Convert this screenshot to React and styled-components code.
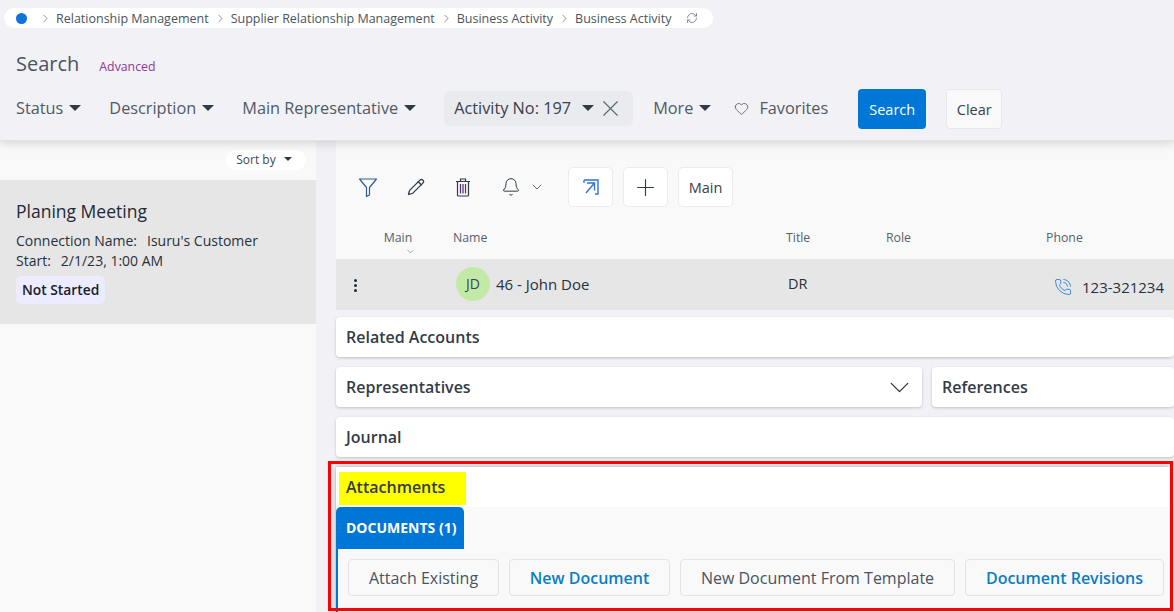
import React from 'react';
import styled, { createGlobalStyle } from 'styled-components';
import { ChevronRight, ChevronDown, RefreshCw, X, Heart, Pencil, Bell, Plus, PhoneCall } from 'lucide-react';

const Global = createGlobalStyle`
  html, body { margin: 0; padding: 0; height: 100%; overflow: hidden; }
  body { font-family: "Open Sans", "Liberation Sans", sans-serif; background: #f2f1f5; color: #1f2a36; }
  * { box-sizing: border-box; }
`;

const Page = styled.div`
  position: relative;
  width: 1174px;
  height: 612px;
  overflow: hidden;
  display: flex;
  flex-direction: column;
`;

const Header = styled.header`
  height: 141px;
  flex: none;
  padding: 8px 0 0 4px;
  background: #f2f1f5;
  border-bottom: 1px solid #e2e2e4;
  box-shadow: 0 2px 10px rgba(0, 0, 0, 0.16);
  position: relative;
  z-index: 2;
`;

const Crumbs = styled.nav`
  width: 709px;
  height: 20px;
  border-radius: 10px;
  background: #fff;
  display: flex;
  align-items: center;
  padding-left: 12px;
  font-size: 12.5px;
  color: #4a5460;
  svg { flex: none; }
`;

const Dot = styled.span`
  width: 11px;
  height: 11px;
  border-radius: 50%;
  background: #0b76d8;
  margin-right: 12px;
`;

const Crumb = styled.span`
  margin: 0 5px 0 4px;
  white-space: nowrap;
`;

const Refresh = styled.span`
  display: flex;
  margin-left: 10px;
`;

const SearchRow = styled.div`
  display: flex;
  align-items: baseline;
  padding: 22px 0 0 12px;
  height: 56px;
`;

const SearchTitle = styled.h1`
  margin: 0;
  font-size: 20px;
  font-weight: 400;
  color: #4a5460;
  line-height: 28px;
`;

const AdvancedLink = styled.a`
  margin-left: 20px;
  font-size: 12.3px;
  color: #8e3a96;
`;

const FilterRow = styled.div`
  display: flex;
  align-items: center;
  height: 36px;
  margin-top: 6px;
  padding-left: 12px;
`;

const FilterItem = styled.div`
  display: flex;
  align-items: center;
  gap: 6px;
  font-size: 16.3px;
  color: #4f5a66;
  white-space: nowrap;
  margin-right: ${({ $gap }) => $gap}px;
`;

const Caret = styled.span`
  display: inline-block;
  width: 0;
  height: 0;
  border-left: ${({ $size }) => $size || 6}px solid transparent;
  border-right: ${({ $size }) => $size || 6}px solid transparent;
  border-top: ${({ $size }) => $size || 6}px solid #2f3a46;
`;

const ActiveFilter = styled.div`
  display: flex;
  align-items: center;
  width: 189px;
  height: 35px;
  padding-left: 10px;
  border-radius: 6px;
  background: #e9ebee;
  font-size: 16.3px;
  color: #37414c;
  white-space: nowrap;
  margin-right: 20px;
`;

const ActiveCaret = styled(Caret)`
  margin: 0 3px 0 11px;
`;

const Favorites = styled.div`
  display: flex;
  align-items: center;
  gap: 10px;
  font-size: 16.3px;
  color: #4f5a66;
  margin-right: 30px;
`;

const SearchButton = styled.button`
  width: 68px;
  height: 40px;
  margin: 2px 20px 0 0;
  border: none;
  border-radius: 4px;
  background: #0076d6;
  color: #fff;
  font: 400 14.5px "Open Sans", sans-serif;
`;

const ClearButton = styled.button`
  width: 56px;
  height: 40px;
  margin-top: 2px;
  border: 1px solid #e8e8ea;
  border-radius: 4px;
  background: #f9f9f9;
  color: #37414c;
  font: 400 14.5px "Open Sans", sans-serif;
`;

const Body = styled.div`
  flex: 1;
  display: grid;
  grid-template-columns: 316px 838px;
  column-gap: 20px;
  min-height: 0;
`;

const Sidebar = styled.aside`
  background: #f9f9f9;
`;

const SortRow = styled.div`
  display: flex;
  justify-content: flex-end;
  padding: 9px 10px 10px 0;
`;

const SortPill = styled.div`
  width: 80px;
  height: 20px;
  padding: 0 4px 2px 0;
  border-radius: 10px;
  background: #fff;
  display: flex;
  align-items: center;
  justify-content: center;
  gap: 8px;
  font-size: 12px;
  color: #3d4854;
`;

const ActivityCard = styled.div`
  height: 144px;
  background: #e6e6e6;
  padding: 19px 16px 0;
`;

const ActivityTitle = styled.div`
  font-size: 17.5px;
  line-height: 25px;
  color: #1f2a36;
  margin-bottom: 7px;
`;

const ActivityLine = styled.div`
  font-size: 14px;
  line-height: 20px;
  color: #27313c;
  span { margin-left: 10px; }
`;

const StatusBadge = styled.div`
  display: inline-block;
  margin-top: 5px;
  padding: 0 6px;
  height: 28px;
  line-height: 27px;
  border-radius: 5px;
  background: #ecebff;
  font-size: 13.8px;
  font-weight: 600;
  color: #17202a;
`;

const Main = styled.main`
  min-width: 0;
`;

const ContactPanel = styled.section`
  background: #f9f9f9;
  height: 169px;
`;

const Toolbar = styled.div`
  height: 66px;
  padding: 26px 0 0 22px;
  display: flex;
  align-items: center;
`;

const ToolIcon = styled.span`
  display: flex;
  color: #2f3a46;
  margin-right: ${({ $gap }) => $gap}px;
`;

const ToolButton = styled.button`
  height: 40px;
  width: ${({ $w }) => $w}px;
  border: 1px solid #ececec;
  border-radius: 5px;
  background: #fff;
  color: #37414c;
  display: flex;
  align-items: center;
  justify-content: center;
  font: 400 14.5px "Open Sans", sans-serif;
  margin-right: 10px;
  padding: 0;
`;

const ColumnHeads = styled.div`
  display: grid;
  grid-template-columns: 47px 70px 333px 100px 160px 1fr;
  height: 52px;
  padding-top: 23px;
  font-size: 12.3px;
  color: #56616d;
`;

const HeadCell = styled.div`
  display: flex;
  flex-direction: column;
  line-height: 16px;
`;

const SortableHead = styled(HeadCell)`
  align-items: center;
  padding-right: 40px;
  svg { margin-left: 24px; }
`;

const ContactRow = styled.div`
  display: grid;
  grid-template-columns: 47px 70px 333px 100px 160px 1fr;
  height: 51px;
  background: #e6e6e6;
  font-size: 15px;
  color: #27313c;
`;

const RowCell = styled.div`
  display: flex;
  align-items: center;
  height: 51px;
  padding-bottom: 2px;
  white-space: nowrap;
`;

const TitleCell = styled(RowCell)`
  padding-left: 2px;
  font-size: 14.5px;
`;

const Kebab = styled.span`
  margin: 3px 0 0 18px;
  display: flex;
  flex-direction: column;
  gap: 2px;
  i {
    width: 3px;
    height: 3px;
    border-radius: 50%;
    background: #1f2a36;
  }
`;

const Avatar = styled.span`
  width: 34px;
  height: 34px;
  border-radius: 50%;
  background: #c3e9a6;
  display: flex;
  align-items: center;
  justify-content: center;
  margin: 0 6px 0 3px;
  color: #3a4650;
  font-size: 14px;
`;

const PhoneCell = styled(RowCell)`
  gap: 10px;
  padding: 5px 0 0 8px;
`;

const Panels = styled.div`
  display: flex;
  flex-direction: column;
  gap: 10px;
  padding-top: 7px;
`;

const PanelRow = styled.div`
  display: flex;
  gap: 10px;
`;

const Panel = styled.div`
  flex: ${({ $w }) => ($w ? `0 0 ${$w}px` : '1 1 auto')};
  height: 40px;
  background: #fff;
  border-radius: 4px;
  box-shadow: 0 1px 3px rgba(0, 0, 0, 0.2);
  display: flex;
  align-items: center;
  justify-content: space-between;
  padding: 0 13px 0 10px;
  font-size: 16px;
  font-weight: 600;
  color: #333c46;
`;

const PanelChevron = styled.span`
  display: flex;
  margin-right: -7px;
  color: #2f3a46;
`;

const AttachmentsPanel = styled.section`
  background: #fff;
  box-shadow: 0 0 6px rgba(0, 0, 0, 0.3);
  height: 150px;
  margin-right: 4px;
`;

const AttachmentsHead = styled.div`
  height: 40px;
  padding: 5px 0 0 3px;
`;

const Highlight = styled.div`
  width: 127px;
  height: 33px;
  background: #ffff00;
  padding-left: 7px;
  line-height: 30px;
  font-size: 16px;
  font-weight: 600;
  color: #333c46;
`;

const TabArea = styled.div`
  height: 110px;
  background: #f9f9f9;
`;

const ActiveTab = styled.div`
  width: 128px;
  height: 42px;
  border-radius: 5px 5px 0 0;
  background: #0076d6;
  color: #fff;
  font-size: 14px;
  font-weight: 700;
  line-height: 42px;
  padding-left: 10px;
  white-space: nowrap;
`;

const TabContent = styled.div`
  border-left: 2px solid #0076d6;
  height: 68px;
  padding: 10px 0 0 10px;
  display: flex;
  gap: 10px;
  box-shadow: inset 0 -11px 6px -6px rgba(0, 0, 0, 0.1);
`;

const DocButton = styled.button`
  width: ${({ $w }) => $w}px;
  height: 37px;
  flex: none;
  border: 1px solid #e4e4e4;
  border-radius: 4px;
  background: #f9f9f9;
  color: ${({ $link }) => ($link ? '#0b7dc4' : '#4a5460')};
  font: ${({ $link }) => ($link ? 600 : 400)} 16px "Open Sans", sans-serif;
  padding: 0;
  white-space: nowrap;
`;

// red annotation drawn on top of the screenshot
const RedMark = styled.div`
  position: absolute;
  left: 328px;
  top: 461px;
  width: 845px;
  height: 150px;
  border: 3px solid #ff0000;
  pointer-events: none;
  z-index: 3;
`;

const crumbs = ['Relationship Management', 'Supplier Relationship Management', 'Business Activity', 'Business Activity'];

const FunnelIcon = () => (
  <svg width="20" height="20" viewBox="0 0 20 20" fill="none" stroke="#2f5f8a" strokeWidth="1.2" strokeLinejoin="round">
    <path d="M1.5 2h17l-7 8.5v7.5l-3 1.5v-9z" />
  </svg>
);

const LaunchIcon = () => (
  <svg width="18" height="18" viewBox="0 0 18 18" fill="none" stroke="#2f74d0" strokeWidth="1.4">
    <path d="M2 2h14v14h-3M2 2v3" />
    <path d="M5 5h7.5v7.5M12.5 5 4 15" />
  </svg>
);

const TrashIcon = () => (
  <svg width="16" height="19" viewBox="0 0 16 19" fill="none" stroke="#2f3a46" strokeWidth="1.2">
    <path d="M1 3.5h14M5.5 3.5V1h5v2.5" />
    <path d="M2.5 3.5v13.5a1 1 0 0 0 1 1h9a1 1 0 0 0 1-1V3.5" />
    <path d="M5.5 6v9.5M8 6v9.5" stroke="#4a2c6c" />
    <path d="M10.5 6v9.5" stroke="#6c2c4c" />
  </svg>
);

export default function App() {
  return (
    <Page>
      <Global />
      <Header>
        <Crumbs>
          <Dot />
          {crumbs.map((c, i) => (
            <React.Fragment key={i}>
              <ChevronRight size={13} strokeWidth={1.3} color="#5a6470" />
              <Crumb>{c}</Crumb>
            </React.Fragment>
          ))}
          <Refresh><RefreshCw size={12} strokeWidth={1.4} color="#5a6470" /></Refresh>
        </Crumbs>
        <SearchRow>
          <SearchTitle>Search</SearchTitle>
          <AdvancedLink>Advanced</AdvancedLink>
        </SearchRow>
        <FilterRow>
          <FilterItem $gap={28}>Status <Caret /></FilterItem>
          <FilterItem $gap={28}>Description <Caret /></FilterItem>
          <FilterItem $gap={28}>Main Representative <Caret /></FilterItem>
          <ActiveFilter>
            Activity No: 197
            <ActiveCaret />
            <X size={27} strokeWidth={1} color="#5a6470" />
          </ActiveFilter>
          <FilterItem $gap={23}>More <Caret /></FilterItem>
          <Favorites><Heart size={15} strokeWidth={1.3} color="#4f5a66" /> Favorites</Favorites>
          <SearchButton>Search</SearchButton>
          <ClearButton>Clear</ClearButton>
        </FilterRow>
      </Header>
      <Body>
        <Sidebar>
          <SortRow>
            <SortPill>Sort by <Caret $size={4} /></SortPill>
          </SortRow>
          <ActivityCard>
            <ActivityTitle>Planing Meeting</ActivityTitle>
            <ActivityLine>Connection Name:<span>Isuru's Customer</span></ActivityLine>
            <ActivityLine>Start:<span>2/1/23, 1:00 AM</span></ActivityLine>
            <StatusBadge>Not Started</StatusBadge>
          </ActivityCard>
        </Sidebar>
        <Main>
          <ContactPanel>
            <Toolbar>
              <ToolIcon $gap={29}><FunnelIcon /></ToolIcon>
              <ToolIcon $gap={30}><Pencil size={18} strokeWidth={1.7} /></ToolIcon>
              <ToolIcon $gap={30}><TrashIcon /></ToolIcon>
              <ToolIcon $gap={8}><Bell size={20} strokeWidth={1.2} /></ToolIcon>
              <ToolIcon $gap={23}><ChevronDown size={16} strokeWidth={1.1} /></ToolIcon>
              <ToolButton $w={45}><LaunchIcon /></ToolButton>
              <ToolButton $w={45}><Plus size={27} strokeWidth={1} color="#2f3a46" /></ToolButton>
              <ToolButton $w={55}>Main</ToolButton>
            </Toolbar>
            <ColumnHeads>
              <div />
              <SortableHead>Main<ChevronDown size={11} strokeWidth={1.2} /></SortableHead>
              <HeadCell>Name</HeadCell>
              <HeadCell>Title</HeadCell>
              <HeadCell>Role</HeadCell>
              <HeadCell>Phone</HeadCell>
            </ColumnHeads>
            <ContactRow>
              <RowCell><Kebab><i /><i /><i /></Kebab></RowCell>
              <div />
              <RowCell><Avatar>JD</Avatar>46 - John Doe</RowCell>
              <TitleCell>DR</TitleCell>
              <div />
              <PhoneCell><PhoneCall size={18} strokeWidth={1.2} color="#2f7fd6" />123-321234</PhoneCell>
            </ContactRow>
          </ContactPanel>
          <Panels>
            <Panel>Related Accounts</Panel>
            <PanelRow>
              <Panel $w={586}>Representatives <PanelChevron><ChevronDown size={33} strokeWidth={1} /></PanelChevron></Panel>
              <Panel>References</Panel>
            </PanelRow>
            <Panel>Journal</Panel>
            <AttachmentsPanel>
              <AttachmentsHead><Highlight>Attachments</Highlight></AttachmentsHead>
              <TabArea>
                <ActiveTab>DOCUMENTS (1)</ActiveTab>
                <TabContent>
                  <DocButton $w={151}>Attach Existing</DocButton>
                  <DocButton $w={161} $link>New Document</DocButton>
                  <DocButton $w={275}>New Document From Template</DocButton>
                  <DocButton $w={199} $link>Document Revisions</DocButton>
                </TabContent>
              </TabArea>
            </AttachmentsPanel>
          </Panels>
        </Main>
      </Body>
      <RedMark />
    </Page>
  );
}
